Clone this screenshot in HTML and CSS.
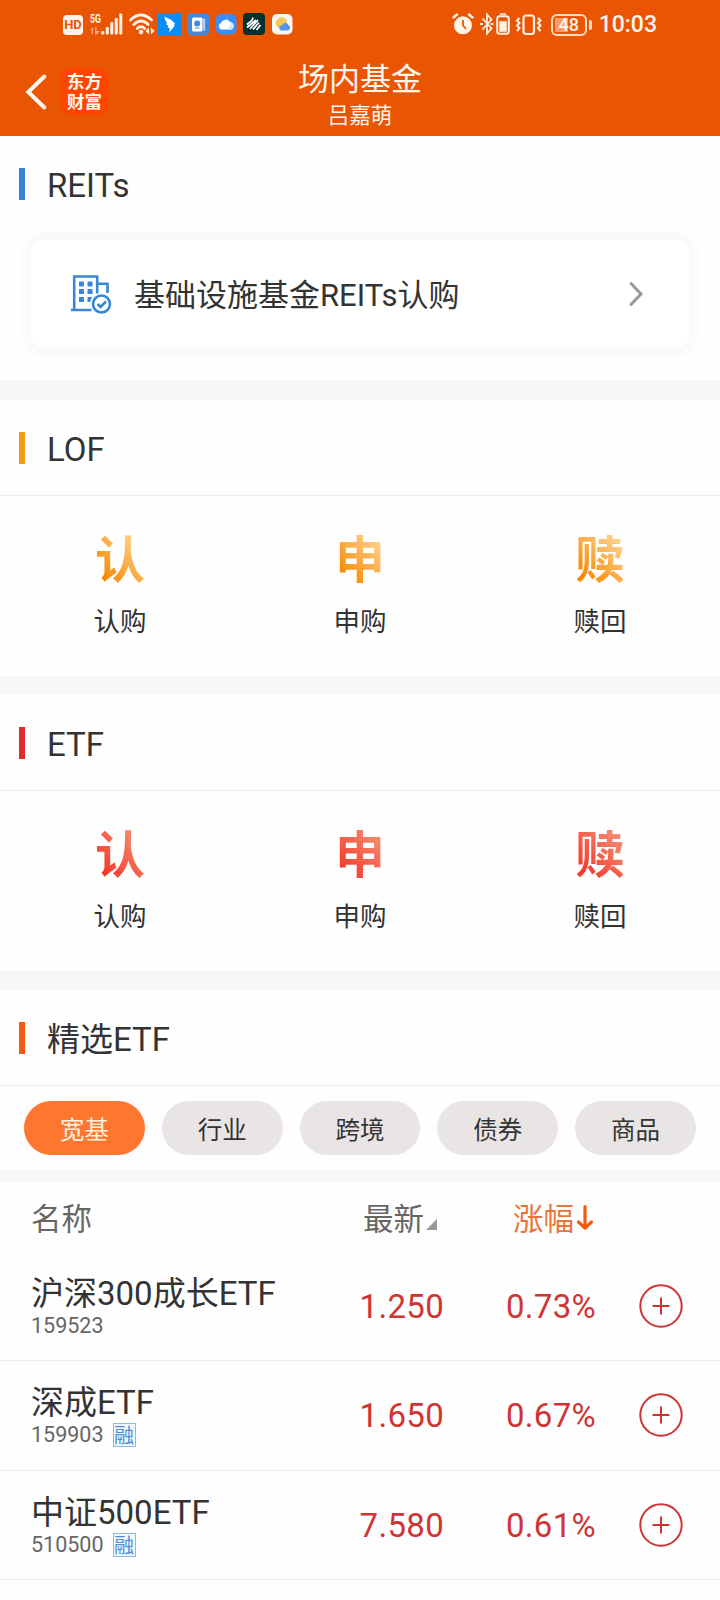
FILE: index.html
```
<!DOCTYPE html>
<html lang="zh-CN">
<head>
  <meta charset="UTF-8">
  <title>场内基金</title>
  <meta name="viewport" content="width=device-width, initial-scale=1">
  <link rel="stylesheet" href="styles.css">
</head>
<body>

  <header class="header">
    <div class="status">
      <div class="status-left">
        <span class="hd">HD</span>
        <svg class="signal" width="33" height="22" viewBox="0 0 33 22">
          <text x="0" y="10" class="net" textLength="11" lengthAdjust="spacingAndGlyphs">5G</text>
          <g fill="#ffa777"><path d="M0 17l3-3v7H1.500v-4zM5 14h1.500v4H10l-3.500 3.500H5z"/></g>
          <g fill="#fff3e8"><rect x="11.300" y="18" width="3" height="3.500" rx="1"/><rect x="15.800" y="14" width="3" height="7.500" rx="1"/><rect x="20.300" y="9" width="3" height="12.500" rx="1"/><rect x="24.800" y="5" width="3" height="16.500" rx="1"/><rect x="29.300" y="0.500" width="3" height="21" rx="1"/></g>
        </svg>
        <svg class="wifi" width="26" height="22" viewBox="0 0 26 22">
          <g fill="none" stroke="#fff3e8" stroke-width="2.800" stroke-linecap="round"><path d="M1.500 7Q12 -3 22.500 7M4.800 11.500Q12 4.500 19.200 11.500M8.300 15.500Q12 12 15.700 15.500"/></g>
          <circle cx="12" cy="19" r="2.300" fill="#fff3e8"/>
          <path d="M20 14.500v7l-3.500-3.500zM21.800 14.500v7l3.700-3.500z" fill="#fff3e8"/>
        </svg>
        <svg class="app" width="23" height="23" viewBox="0 0 23 23">
          <rect width="23" height="23" fill="#0b8df5"/>
          <path d="M6.500 3.500Q13 6 17 10.500L15.500 12.500H17L11 19.500L12 15.500L9.500 14.500L10.500 13L8 11L9 10Q6.500 7 6.500 3.500z" fill="#fff"/>
        </svg>
        <svg class="app id-app" width="23" height="23" viewBox="0 0 23 23">
          <rect width="22.500" height="22.500" rx="5" fill="#4588dc"/>
          <rect x="5" y="4.500" width="10.500" height="14" rx="1.500" fill="#fff"/>
          <path d="M16.500 5.500h1.200v12h-1.200z" fill="#fff"/>
          <circle cx="10.200" cy="10.500" r="3" fill="#4588dc"/><path d="M8 15h4.500" stroke="#4588dc"/>
        </svg>
        <svg class="app cloud-app" width="21" height="21" viewBox="0 0 21 21">
          <rect width="20.500" height="20.500" rx="5" fill="#3b8dfa"/>
          <path d="M5 15.500a3.500 3.500 0 0 1 0-6.500a5 5 0 0 1 9-1a4 4 0 0 1 1.500 7.500z" fill="#fff"/>
          <path d="M9 15.500q5 0 6-7.500a4 4 0 0 1 .5 7.500z" fill="#cfe5ff"/>
        </svg>
        <svg class="app dark-app" width="22" height="22" viewBox="0 0 22 22">
          <rect width="22" height="22" rx="4" fill="#032f2c"/>
          <path d="M4 11.500l5-4 1-3M6 13l7-6M7 16l8-9M10 16.500l6-7M13.500 17l4-5M4 14.500l3-2.500" stroke="#fff" stroke-width="1.800"/>
        </svg>
        <svg class="app weather-app" width="21" height="21" viewBox="0 0 21 21">
          <rect width="20.500" height="20.500" rx="5" fill="#f7f7f7"/>
          <circle cx="9.500" cy="9" r="5.800" fill="#f4ca55"/>
          <path d="M10 16.500a2.600 2.600 0 0 1 0-5.200a3.500 3.500 0 0 1 6.500 0a2.800 2.800 0 0 1-.5 5.200z" fill="#5792ec"/>
        </svg>
      </div>
      <div class="status-right">
        <svg class="alarm" width="22" height="22" viewBox="0 0 22 22">
          <circle cx="11" cy="12.300" r="9" fill="#fff3e8"/>
          <path d="M1.500 4.500L5 1.500M20.500 4.500L17 1.500" stroke="#fff3e8" stroke-width="2.500" stroke-linecap="round"/>
          <path d="M11 7v5.500l3 3.500" fill="none" stroke="#ea5504" stroke-width="1.800"/>
        </svg>
        <svg class="bluetooth" width="30" height="22" viewBox="0 0 30 22">
          <path d="M2.500 5.500L11.500 15.500L7 20.500V1.500L11.500 6.500L2.500 16.500" fill="none" stroke="#fff3e8" stroke-width="1.800"/>
          <path d="M0 11h3M10.500 11h3" stroke="#fff3e8" stroke-width="2"/>
          <rect x="17.200" y="3.200" width="11.600" height="17.600" rx="2.500" fill="none" stroke="#fff3e8" stroke-width="2"/>
          <path d="M20 1h6M20 9h6v9h-6z" stroke="#fff3e8" stroke-width="1.500" fill="#fff3e8"/>
        </svg>
        <svg class="vibrate" width="28" height="22" viewBox="0 0 28 22">
          <rect x="8.500" y="1.500" width="10.500" height="18.500" rx="2.500" fill="none" stroke="#fff3e8" stroke-width="2.200"/>
          <path d="M4.500 4L2 6.500L4.500 9L2 11.500L4.500 14L2 17M23 4L25.500 6.500L23 9L25.500 11.500L23 14L25.500 17" fill="none" stroke="#fff3e8" stroke-width="2"/>
        </svg>
        <span class="battery">48</span>
        <span class="battery-tip"></span>
        <span class="time">10:03</span>
      </div>
    </div>

    <div class="nav">
      <div class="nav-side">
        <svg class="back" width="22" height="36" viewBox="0 0 22 36">
          <path d="M18.300 2.500L2.300 18L18.300 33.500" fill="none" stroke="#fff6ee" stroke-width="4" stroke-linecap="round"/>
        </svg>
        <div class="logo">东方<br>财富</div>
      </div>
      <div class="nav-title">
        <h1>场内基金</h1>
        <p>吕嘉萌</p>
      </div>
      <div class="nav-side"></div>
    </div>
  </header>

  <section class="section reits">
    <h2 class="heading blue">REITs</h2>
    <div class="card">
      <svg class="building" width="42" height="40" viewBox="0 0 42 40">
        <g fill="none" stroke="#3787d4" stroke-width="2.600">
          <path d="M0 36h20.500M3.200 35.500V2.500H26.200V19.500M26.200 9.800H36.500V19"/>
          <circle cx="30.500" cy="30" r="8.500"/>
          <path d="M26.500 30l3 3l5.500-5.500"/>
        </g>
        <g fill="#3787d4">
          <rect x="8" y="7.500" width="5" height="5"/><rect x="16.500" y="7.500" width="5" height="5"/>
          <rect x="8" y="15" width="5" height="5"/><rect x="16.500" y="15" width="5" height="5"/>
          <rect x="8" y="23" width="5" height="5"/><path d="M16.500 23h4.500l-2 5h-2.500z"/>
        </g>
      </svg>
      <span class="card-text">基础设施基金REITs认购</span>
      <svg class="chevron" width="16" height="26" viewBox="0 0 16 26">
        <path d="M2 2.500L12 13L2 23.500" fill="none" stroke="#999" stroke-width="3" stroke-linecap="round"/>
      </svg>
    </div>
  </section>

  <section class="section">
    <h2 class="heading yellow">LOF</h2>
    <div class="actions lof">
      <div class="action"><b>认</b><span>认购</span></div>
      <div class="action"><b>申</b><span>申购</span></div>
      <div class="action"><b>赎</b><span>赎回</span></div>
    </div>
  </section>

  <section class="section">
    <h2 class="heading red">ETF</h2>
    <div class="actions etf">
      <div class="action"><b>认</b><span>认购</span></div>
      <div class="action"><b>申</b><span>申购</span></div>
      <div class="action"><b>赎</b><span>赎回</span></div>
    </div>
  </section>

  <section class="section featured">
    <h2 class="heading orange">精选ETF</h2>
    <div class="tabs">
      <div class="tab active">宽基</div>
      <div class="tab">行业</div>
      <div class="tab">跨境</div>
      <div class="tab">债券</div>
      <div class="tab">商品</div>
    </div>
  </section>

  <section class="list">
    <div class="list-head">
      <div>名称</div>
      <div class="sort">最新<i class="corner"></i></div>
      <div class="sort sorted">涨幅<svg class="arrow" width="18" height="26" viewBox="0 0 18 26"><path d="M9 1.500V22M2.500 17L9 23L15.500 17" fill="none" stroke="#f45a0c" stroke-width="3.200" stroke-linecap="round" stroke-linejoin="round"/></svg></div>
      <div></div>
    </div>

    <div class="row">
      <div class="fund">
        <div class="fund-name">沪深300成长ETF</div>
        <div class="fund-code">159523</div>
      </div>
      <div class="num">1.250</div>
      <div class="num">0.73%</div>
      <svg class="add" width="44" height="44" viewBox="0 0 44 44"><circle cx="22" cy="22" r="20.700"/><path d="M13.500 22h17M22 13.500v17"/></svg>
    </div>
    <div class="row">
      <div class="fund">
        <div class="fund-name">深成ETF</div>
        <div class="fund-code">159903 <span class="tag">融</span></div>
      </div>
      <div class="num">1.650</div>
      <div class="num">0.67%</div>
      <svg class="add" width="44" height="44" viewBox="0 0 44 44"><circle cx="22" cy="22" r="20.700"/><path d="M13.500 22h17M22 13.500v17"/></svg>
    </div>
    <div class="row">
      <div class="fund">
        <div class="fund-name">中证500ETF</div>
        <div class="fund-code">510500 <span class="tag">融</span></div>
      </div>
      <div class="num">7.580</div>
      <div class="num">0.61%</div>
      <svg class="add" width="44" height="44" viewBox="0 0 44 44"><circle cx="22" cy="22" r="20.700"/><path d="M13.500 22h17M22 13.500v17"/></svg>
    </div>
  </section>

</body>
</html>
```
FILE: styles.css
```
* {
  box-sizing: border-box;
}

body {
  margin: 0;
  width: 720px;
  height: 1600px;
  overflow: hidden;
  background: #fefefe;
  color: #333;
  font-family: Roboto, "Noto Sans CJK SC", sans-serif;
}

svg {
  display: block;
  flex: none;
  overflow: visible;
}

h1, h2, p {
  margin: 0;
  font-weight: 400;
}

/* header */
.header {
  height: 136px;
  background: #ea5504;
  color: #fff6ee;
}

.status {
  display: flex;
  justify-content: space-between;
  height: 48px;
  padding: 13px 63px 0 63px;
}

.status-left,
.status-right {
  display: flex;
  align-items: flex-start;
}

.hd {
  width: 20px;
  height: 20px;
  margin: 2px 7px 0 0;
  border-radius: 4px;
  background: #fff3e8;
  color: #ea5504;
  font-size: 13px;
  font-weight: 700;
  line-height: 20px;
  text-align: center;
}

.signal {
  margin-right: 6px;
}

.net {
  fill: #fff3e8;
  font-size: 12px;
  font-weight: 700;
}

.wifi {
  margin-right: 3px;
}

.app {
  margin-right: 6px;
}

.cloud-app,
.weather-app {
  margin-top: 1px;
}

.dark-app {
  margin-right: 7px;
}

.alarm {
  margin-right: 6px;
}

.bluetooth {
  margin-right: 5px;
}

.vibrate {
  margin: 1px 8px 0 0;
}

.battery {
  width: 36px;
  height: 22px;
  margin-top: 1px;
  border: 2px solid #ffdcc4;
  border-radius: 6px;
  background: linear-gradient(90deg, #f79c6c 48%, transparent 48%) 2px 2px / 28px 14px no-repeat;
  font-size: 18px;
  font-weight: 500;
  line-height: 18px;
  text-align: center;
}

.battery-tip {
  width: 3px;
  height: 10px;
  margin: 7px 7px 0 2px;
  border-radius: 0 2px 2px 0;
  background: #ffdcc4;
}

.time {
  font-size: 23px;
  font-weight: 500;
  line-height: 24px;
}

.nav {
  display: flex;
  height: 88px;
}

.nav-side {
  display: flex;
  flex: 1;
}

.back {
  margin: 26px 13px 0 26px;
}

.logo {
  width: 47px;
  height: 47px;
  margin-top: 20px;
  padding-top: 4px;
  border-radius: 11px;
  background: #ff4500;
  font-size: 17.5px;
  font-weight: 700;
  line-height: 20px;
  text-align: center;
}

.nav-title {
  text-align: center;
}

.nav-title h1 {
  padding-top: 12px;
  font-size: 31px;
  line-height: 40px;
}

.nav-title p {
  padding-top: 1px;
  font-size: 21.5px;
  line-height: 30px;
}

/* sections */
.section {
  border-bottom: 19px solid #f6f7f9;
}

.heading {
  display: flex;
  height: 96px;
  padding: 32px 0 0 19px;
  border-bottom: 1px solid #ececec;
  font-size: 33px;
  line-height: 36px;
}

.heading::before {
  content: "";
  width: 6px;
  height: 32px;
  margin-right: 22px;
}

.blue::before { background: #3b82d6; }
.yellow::before { background: #f59a14; }
.red::before { background: #dc2c30; }
.orange::before { background: #f05a14; }

.reits {
  height: 264px;
  border-bottom-width: 20px;
}

.reits .heading {
  border: none;
}

.card {
  display: flex;
  align-items: center;
  width: 658px;
  height: 108px;
  margin: 8px 0 0 31px;
  padding: 0 44px 0 40px;
  border-radius: 12px;
  background: #fff;
  box-shadow: 0 0 0 4px #f9f9f9, 0 0 3px 9px #fbfbfb;
}

.building {
  margin-right: 21px;
}

.card-text {
  flex: 1;
  padding-top: 4px;
  font-size: 31px;
  line-height: 40px;
}

/* LOF / ETF actions */
.actions {
  display: grid;
  grid-template-columns: repeat(3, 1fr);
  height: 180px;
}

.action {
  display: flex;
  flex-direction: column;
  align-items: center;
  padding-top: 36px;
}

.action b {
  width: 50px;
  font-size: 50px;
  font-weight: 700;
  line-height: 58px;
  color: transparent;
  background-clip: text;
  -webkit-background-clip: text;
}

.lof b {
  background-image: linear-gradient(45deg, #f58a04 20%, #ffd08a 85%);
}

.etf b {
  background-image: linear-gradient(45deg, #f5392c 20%, #f58a70 85%);
}

.action span {
  margin-top: 16px;
  font-size: 26.5px;
  line-height: 32px;
}

/* tabs */
.featured {
  height: 192px;
  border-bottom-width: 12px;
}

.tabs {
  display: flex;
  gap: 17px;
  padding: 15px 24px 0;
}

.tab {
  flex: 1;
  height: 54px;
  border-radius: 27px;
  background: #e9e5e5;
  font-size: 24.5px;
  line-height: 59px;
  text-align: center;
}

.tab.active {
  background: #ff762e;
  color: #fff3e0;
}

/* fund list */
.list-head,
.row {
  display: grid;
  grid-template-columns: 261px 152px 152px 75px;
  padding-left: 31px;
}

.list-head {
  height: 69.5px;
  color: #666;
  font-size: 30.5px;
  line-height: 76px;
}

.sort {
  display: flex;
  justify-content: flex-end;
  padding-right: 7px;
}

.sorted {
  padding-right: 2px;
  color: #e8743a;
}

.corner {
  width: 11px;
  height: 11px;
  margin: 37px 0 0 2px;
  background: #999;
  clip-path: polygon(100% 0, 100% 100%, 0 100%);
}

.arrow {
  margin: 23px 0 0 2px;
}

.row {
  height: 109.5px;
  border-bottom: 1px solid #ececec;
}

.fund {
  padding-top: 23px;
}

.fund-name {
  font-size: 33px;
  line-height: 38px;
  white-space: nowrap;
}

.fund-code {
  display: flex;
  color: #666;
  font-size: 21.5px;
  line-height: 26px;
}

.tag {
  width: 23px;
  height: 24px;
  margin: 1px 0 0 9px;
  border: 1px solid #8dbbe8;
  background: #f2f8ff;
  color: #4a8edb;
  font-size: 20px;
  line-height: 24px;
  text-align: center;
}

.num {
  padding-right: 0;
  color: #cf3433;
  font-size: 33px;
  letter-spacing: 0.3px;
  line-height: 110px;
  text-align: right;
}

.add {
  margin: 32px 0 0 43px;
  fill: none;
  stroke: #cf3433;
  stroke-width: 2;
}
```
